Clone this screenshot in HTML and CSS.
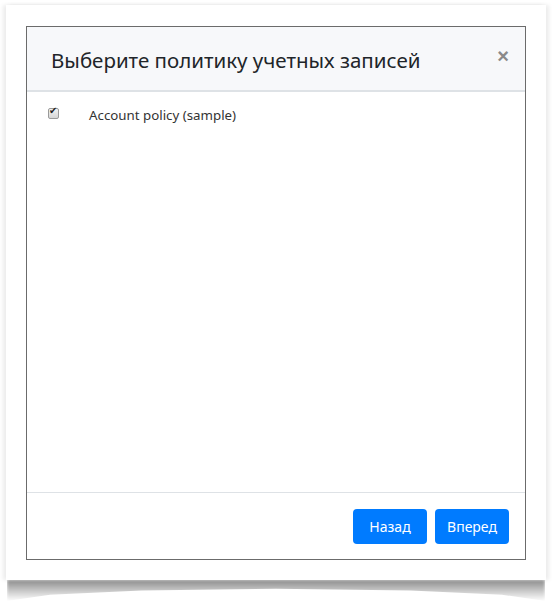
FILE: index.html
```html
<!DOCTYPE html>
<html lang="ru">
<head>
  <meta charset="UTF-8" />
  <meta name="viewport" content="width=device-width, initial-scale=1.0" />
  <title>Политика учетных записей</title>
  <link rel="stylesheet" href="styles.css">
</head>
<body>
  <div class="sheet">
    <div class="paper">
      <div class="modal">
        <div class="modal-header">
          <h4 class="modal-title">Выберите политику учетных записей</h4>
          <button class="close" type="button">&times;</button>
        </div>

        <div class="modal-body">
          <label class="policy">
            <input type="checkbox" checked disabled>
            <span>Account policy (sample)</span>
          </label>
        </div>

        <div class="modal-footer">
          <button class="btn">Назад</button>
          <button class="btn">Вперед</button>
        </div>
      </div>
    </div>
    <div class="curl"></div>
  </div>
</body>
</html>
```

FILE: styles.css
```css
body {
  margin: 0;
  min-height: 609px;
  background: #fff;
  font-family: "Noto Sans", "Open Sans", sans-serif;
  color: #212529;
}

.sheet {
  width: 540px;
  padding: 5px 0 0 6px;
}

.paper {
  width: 540px;
  height: 575px;
  padding: 21px 20px 0;
  box-sizing: border-box;
  background: #fff;
  box-shadow: -3px 0 4px rgba(0, 0, 0, 0.08), 3px 0 4px rgba(0, 0, 0, 0.08);
}

/* curled shadow under the sheet: deep at the corners, shallow in the middle */
.curl {
  height: 21px;
  margin: 0 1px;
  background: linear-gradient(to bottom, rgba(0, 0, 0, 0.45), rgba(0, 0, 0, 0.2) 55%, rgba(0, 0, 0, 0));
  clip-path: polygon(0 0, 100% 0, 100% 100%, 92% 70%, 75% 50%, 50% 42%, 25% 50%, 8% 70%, 0 100%);
  filter: blur(1.5px);
}

.modal {
  width: 500px;
  height: 534px;
  box-sizing: border-box;
  border: 1px solid #6b6b6b;
  display: flex;
  flex-direction: column;
  background: #fff;
}

.modal-header {
  display: flex;
  align-items: center;
  justify-content: space-between;
  height: 63px;
  padding: 0 16px 0 24px;
  background: #f7f8fa;
  border-bottom: 2px solid #dee2e6;
}

.modal-title {
  margin: 3px 0 0;
  font-size: 20.5px;
  font-weight: 400;
  color: #212529;
}

.close {
  border: 0;
  background: none;
  padding: 0;
  margin-top: -4px;
  font-size: 20px;
  font-weight: 700;
  color: #8a8a8a;
  cursor: pointer;
}

.modal-body {
  flex: 1;
  padding: 14px 20px;
}

.policy {
  display: flex;
  align-items: center;
  gap: 30px;
  font-size: 13.3px;
  color: #333;
}

/* greyed-out checkbox with a dark tick */
.policy input {
  appearance: none;
  margin: -4px 0 0 1px;
  width: 11px;
  height: 11px;
  border: 1px solid #9a9a9a;
  border-radius: 2px;
  background: linear-gradient(#f2f2f2, #d6d6d6);
  position: relative;
}

.policy input:checked::after {
  content: "\2714";
  position: absolute;
  left: 0;
  top: -4px;
  font-size: 10px;
  color: #222;
}

.modal-footer {
  display: flex;
  justify-content: flex-end;
  gap: 8px;
  padding: 16px 16px 15px;
  border-top: 1px solid #dee2e6;
}

.btn {
  width: 74px;
  height: 35px;
  border: 0;
  border-radius: 4px;
  background: #007bff;
  color: #fff;
  font-family: inherit;
  font-size: 14px;
  cursor: pointer;
}
```
